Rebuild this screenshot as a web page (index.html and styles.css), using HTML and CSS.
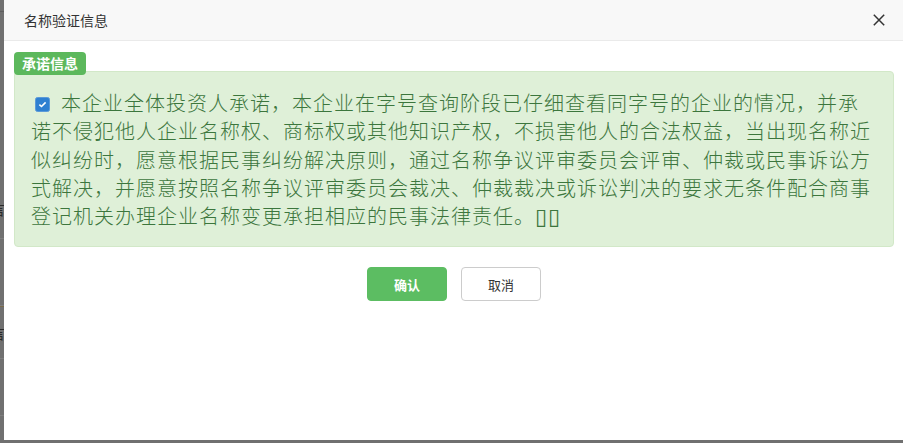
FILE: index.html
```html
<!DOCTYPE html>
<html lang="zh-CN">
<head>
<meta charset="utf-8">
<title>名称验证信息</title>
<link rel="stylesheet" href="styles.css">
</head>
<body>
<div class="backdrop">
  <div class="bg-row r1"></div>
  <div class="bg-row r2"><span class="bg-char">言</span></div>
  <div class="bg-row r3"></div>
  <div class="bg-row r4"><span class="bg-char">言</span></div>
  <div class="bg-row r5"></div>
  <div class="bg-row r6"></div>
</div>
<div class="dialog">
  <div class="dialog-header">
    <span class="dialog-title">名称验证信息</span>
    <span class="close" aria-label="关闭">
      <svg width="12" height="12" viewBox="0 0 12 12"><path d="M0.8 0.8 L11.2 11.2 M11.2 0.8 L0.8 11.2" stroke="#333" stroke-width="1.5" fill="none"/></svg>
    </span>
  </div>
  <div class="dialog-body">
    <div class="legend">承诺信息</div>
    <div class="promise-box">
      <p class="promise-text"><span class="check"><svg width="15" height="15" viewBox="0 0 15 15"><rect x="0.5" y="0.5" width="14" height="14" rx="2" fill="#2f80d1" stroke="#5b9ad8"/><path d="M4.4 7.6 L6.5 9.5 L10.6 5.4" stroke="#fff" stroke-width="1.6" fill="none"/></svg></span>本企业全体投资人承诺，本企业在字号查询阶段已仔细查看同字号的企业的情况，并承诺不侵犯他人企业名称权、商标权或其他知识产权，不损害他人的合法权益，当出现名称近似纠纷时，愿意根据民事纠纷解决原则，通过名称争议评审委员会评审、仲裁或民事诉讼方式解决，并愿意按照名称争议评审委员会裁决、仲裁裁决或诉讼判决的要求无条件配合商事登记机关办理企业名称变更承担相应的民事法律责任。<span class="tofu">▯▯</span></p>
    </div>
    <div class="actions">
      <button class="btn btn-primary">确认</button>
      <button class="btn btn-default">取消</button>
    </div>
  </div>
</div>
</body>
</html>
```

FILE: styles.css
```css
* { box-sizing: border-box; }
html, body { margin: 0; padding: 0; }
body {
  width: 903px;
  height: 443px;
  overflow: hidden;
  background: #707070;
  font-family: "Noto Sans CJK SC", "Noto Sans", sans-serif;
  position: relative;
}
.backdrop { width: 4px; }
.bg-row { border-bottom: 1px solid #7c7c7c; position: relative; overflow: hidden; }
.r1 { height: 12px; border-bottom-color: #5e5e5e; }
.r2 { height: 227px; border-bottom-color: #7e7e7e; }
.r3 { height: 67px; border-bottom-color: #7e7e7e; }
.r4 { height: 53px; border-top: 1px solid #7a6a4a; border-bottom-color: #7e7e7e; }
.r5 { height: 57px; border-bottom-color: #7e7e7e; }
.r6 { height: 30px; border-bottom: none; }
.bg-char {
  position: absolute;
  left: -9px;
  bottom: 22px;
  font-size: 14px;
  color: #2a2a2a;
  line-height: 1;
}
.r2 .bg-char { bottom: 22px; }
.r4 .bg-char { bottom: 18px; }

.dialog {
  position: absolute;
  left: 4px;
  top: 0;
  width: 899px;
  height: 440px;
  background: #fff;
}
.dialog-header {
  height: 41px;
  background: #f8f8f8;
  border-bottom: 1px solid #eaeaea;
  display: flex;
  align-items: center;
  justify-content: space-between;
  padding: 0 18px 0 20px;
}
.dialog-title {
  font-size: 14px;
  color: #333;
  line-height: 1;
}
.close { display: flex; align-items: center; }
.dialog-body {
  padding: 11px 9px 0 10px;
}
.legend {
  display: inline-block;
  position: relative;
  z-index: 1;
  height: 23px;
  width: 72px;
  background: #5cb85c;
  color: #fff;
  font-weight: bold;
  font-size: 14px;
  line-height: 23px;
  text-align: center;
  border-radius: 4px;
  vertical-align: top;
}
.promise-box {
  margin-top: -5px;
  background: #dff0d8;
  border: 1px solid #d2e8c8;
  border-radius: 4px;
  padding: 17px 16px 16px 16px;
}
.promise-text {
  margin: 0;
  font-size: 20px;
  font-weight: 300;
  letter-spacing: 1px;
  line-height: 28.3px;
  color: #3c763d;
}
.check {
  display: inline-block;
  width: 15px;
  height: 15px;
  margin: 0 11px 0 4px;
  vertical-align: -1px;
  line-height: 0;
}
.tofu {
  font-family: "DejaVu Sans", sans-serif;
  font-size: 22px;
  font-weight: normal;
  letter-spacing: 1px;
  line-height: 1;
}
.actions {
  display: flex;
  justify-content: center;
  gap: 14px;
  margin-top: 20px;
}
.btn {
  width: 80px;
  height: 34px;
  border-radius: 4px;
  font-family: "Noto Sans CJK SC", sans-serif;
  font-size: 13px;
  cursor: pointer;
  padding: 0;
}
.btn-primary {
  background: #5cbd62;
  border: 1px solid #5cbd62;
  color: #fff;
  font-weight: bold;
}
.btn-default {
  background: #fff;
  border: 1px solid #cccccc;
  color: #333;
}
```
